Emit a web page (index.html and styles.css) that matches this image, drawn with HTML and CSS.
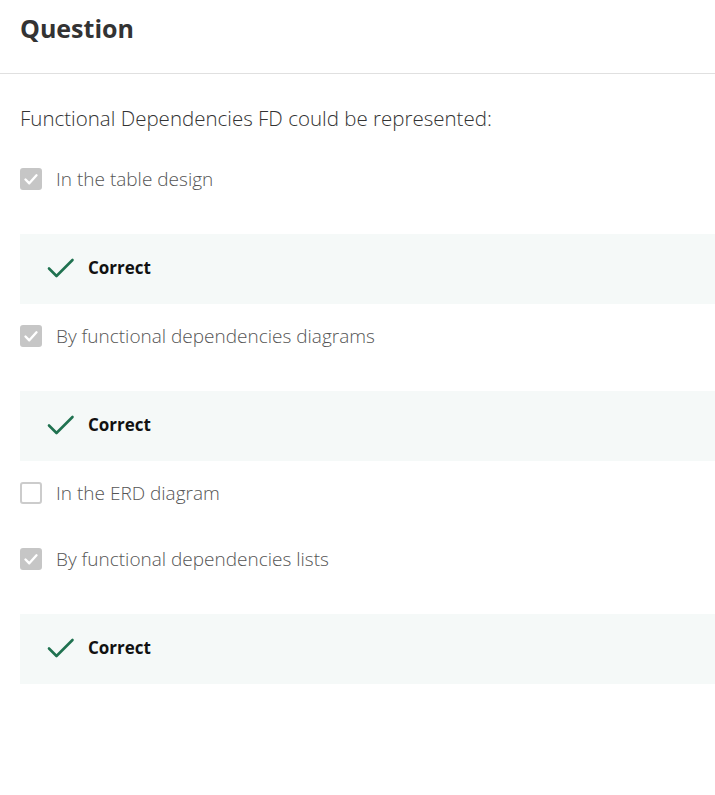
FILE: index.html
```html
<!DOCTYPE html>
<html>
<head>
<meta charset="utf-8">
<link rel="stylesheet" href="styles.css">
</head>
<body>
<div class="page">
  <header class="head"><h1 class="title">Question</h1></header>
  <div class="body">
    <p class="prompt">Functional Dependencies FD could be represented:</p>

    <div class="option">
      <span class="box checked"><svg viewBox="0 0 22 22" width="22" height="22"><path d="M5.5 11.5l3.8 3.8 7.2-8" fill="none" stroke="#fff" stroke-width="2.4" stroke-linecap="round" stroke-linejoin="round"/></svg></span>
      <span class="label">In the table design</span>
    </div>
    <div class="feedback">
      <svg class="tick" viewBox="0 0 28 22" width="28" height="22"><path d="M2 11.5l7.5 7.5L25.5 3" fill="none" stroke="#1f7250" stroke-width="2.6" stroke-linecap="round" stroke-linejoin="round"/></svg>
      <span class="fb-text">Correct</span>
    </div>

    <div class="option">
      <span class="box checked"><svg viewBox="0 0 22 22" width="22" height="22"><path d="M5.5 11.5l3.8 3.8 7.2-8" fill="none" stroke="#fff" stroke-width="2.4" stroke-linecap="round" stroke-linejoin="round"/></svg></span>
      <span class="label">By functional dependencies diagrams</span>
    </div>
    <div class="feedback">
      <svg class="tick" viewBox="0 0 28 22" width="28" height="22"><path d="M2 11.5l7.5 7.5L25.5 3" fill="none" stroke="#1f7250" stroke-width="2.6" stroke-linecap="round" stroke-linejoin="round"/></svg>
      <span class="fb-text">Correct</span>
    </div>

    <div class="option">
      <span class="box"></span>
      <span class="label">In the ERD diagram</span>
    </div>

    <div class="option">
      <span class="box checked"><svg viewBox="0 0 22 22" width="22" height="22"><path d="M5.5 11.5l3.8 3.8 7.2-8" fill="none" stroke="#fff" stroke-width="2.4" stroke-linecap="round" stroke-linejoin="round"/></svg></span>
      <span class="label">By functional dependencies lists</span>
    </div>
    <div class="feedback">
      <svg class="tick" viewBox="0 0 28 22" width="28" height="22"><path d="M2 11.5l7.5 7.5L25.5 3" fill="none" stroke="#1f7250" stroke-width="2.6" stroke-linecap="round" stroke-linejoin="round"/></svg>
      <span class="fb-text">Correct</span>
    </div>
  </div>
</div>
</body>
</html>
```

FILE: styles.css
```css
* { box-sizing: border-box; }
html, body { margin: 0; padding: 0; background: #fff; }
body { font-family: "Open Sans", "Liberation Sans", sans-serif; color: #333; }
.page { width: 715px; }
.head {
  height: 74px;
  border-bottom: 1px solid #e0e0e0;
  padding: 0 20px;
  display: flex;
  align-items: flex-start;
}
.title {
  margin: 11px 0 0;
  font-size: 25px;
  font-weight: 700;
  line-height: 34px;
  color: #333;
}
.body {
  padding: 29px 0 0 20px;
  display: flex;
  flex-direction: column;
}
.prompt {
  margin: 0 0 31px;
  font-size: 20.5px;
  font-weight: 300;
  line-height: 30px;
  color: #333;
}
.option {
  display: flex;
  align-items: center;
  height: 30px;
}
.option + .option { margin-top: 36px; }
.box {
  width: 22px;
  height: 22px;
  border: 2px solid #cccccc;
  border-radius: 3px;
  background: #fff;
  flex: none;
  position: relative;
}
.box.checked { background: #c6c6c6; border-color: #c6c6c6; }
.box svg { position: absolute; left: -2px; top: -2px; }
.label {
  margin-left: 14px;
  font-size: 19px;
  font-weight: 300;
  color: #555;
}
.feedback {
  margin-top: 40px;
  margin-bottom: 17px;
  height: 70px;
  background: #f5f9f8;
  display: flex;
  align-items: center;
  padding-left: 27px;
  padding-bottom: 3px;
}
.tick { flex: none; margin-top: 1px; }
.fb-text {
  margin-left: 13px;
  font-size: 17px;
  font-weight: 700;
  color: #111;
}
```
